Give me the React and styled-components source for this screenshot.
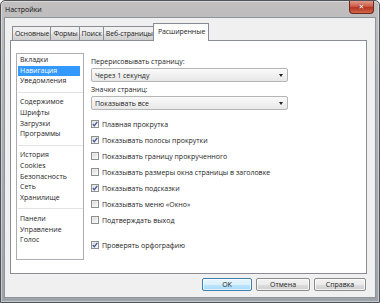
import React from 'react'
import styled, { createGlobalStyle, css } from 'styled-components'

const GlobalStyle = createGlobalStyle`
  html, body {
    margin: 0;
    padding: 0;
    background: #fff;
    overflow: hidden;
  }
  body {
    font-family: "Open Sans", "Noto Sans", Arial, sans-serif;
    font-size: 7px;
    color: #1e1e1e;
  }
`

const sections = [
  ['Вкладки', 'Навигация', 'Уведомления'],
  ['Содержимое', 'Шрифты', 'Загрузки', 'Программы'],
  ['История', 'Cookies', 'Безопасность', 'Сеть', 'Хранилище'],
  ['Панели', 'Управление', 'Голос']
]

const tabs = ['Основные', 'Формы', 'Поиск', 'Веб-страницы', 'Расширенные']

const options = [
  { label: 'Плавная прокрутка', checked: true },
  { label: 'Показывать полосы прокрутки', checked: true },
  { label: 'Показывать границу прокрученного', checked: false },
  { label: 'Показывать размеры окна страницы в заголовке', checked: false },
  { label: 'Показывать подсказки', checked: true },
  { label: 'Показывать меню «Окно»', checked: false },
  { label: 'Подтверждать выход', checked: false },
  { label: 'Проверять орфографию', checked: true, spaced: true }
]

const Window = styled.div`
  width: 380px;
  height: 303px;
  box-sizing: border-box;
  display: flex;
  flex-direction: column;
  border: 1px solid #4f5358;
  border-radius: 5px 5px 0 0;
  background: linear-gradient(180deg, #c2bfbf 0%, #b0b3b8 25%, #9ea3aa 100%);
  box-shadow: inset 0 0 0 1px rgba(255, 255, 255, 0.4);
`

const TitleBar = styled.div`
  height: 16px;
  flex: none;
  display: flex;
  align-items: center;
  justify-content: space-between;
  padding-left: 4px;
`

const Title = styled.span`
  color: #111;
  margin-top: 1px;
`

const CloseButton = styled.div`
  width: 25px;
  height: 13px;
  margin-right: 5px;
  margin-top: -3px;
  box-sizing: border-box;
  border: 1px solid #6b2b22;
  border-top: none;
  border-radius: 0 0 4px 4px;
  background: linear-gradient(180deg, #e39a8c 0%, #cd5a47 45%, #b53520 55%, #d2664a 100%);
  display: flex;
  align-items: center;
  justify-content: center;
  color: #fff;
  font-family: "DejaVu Sans", sans-serif;
  font-weight: bold;
  font-size: 7px;
  line-height: 1;
  text-shadow: 0 0 2px #5a1a10;
`

const Client = styled.div`
  flex: 1;
  margin: 0 3px 4px 3px;
  border: 1px solid #8d949c;
  background: #f0f0f0;
  display: flex;
  flex-direction: column;
  padding: 5px 8px 6px 5px;
`

const TabRow = styled.div`
  display: flex;
  align-items: flex-end;
  padding-left: 2px;
  height: 17px;
  position: relative;
  z-index: 1;
`

const Tab = styled.div`
  box-sizing: border-box;
  height: 14px;
  padding: 0 1px 0 2px;
  border: 1px solid #898c95;
  border-bottom: none;
  margin-right: -1px;
  background: linear-gradient(180deg, #f2f2f2 0%, #ebebeb 50%, #dddddd 51%, #cfcfcf 100%);
  display: flex;
  align-items: center;
  line-height: 1;
  white-space: nowrap;
  letter-spacing: -0.1px;
  ${(p) =>
    p.$active &&
    css`
      height: 18px;
      margin: 0 -2px -1px -1px;
      padding: 0 3px 2px 4px;
      background: #fff;
    `}
`

const Panel = styled.div`
  height: 234px;
  box-sizing: border-box;
  border: 1px solid #898c95;
  background: #fff;
  display: flex;
  gap: 7px;
  padding: 12px 0 0 5px;
`

const ListBox = styled.div`
  width: 68px;
  height: 207px;
  box-sizing: border-box;
  border: 1px solid #abadb3;
  padding: 1px 3px 0 1px;
  flex: none;
`

const ListItem = styled.div`
  height: 10.6px;
  line-height: 10.6px;
  padding-left: 2px;
  white-space: nowrap;
  ${(p) =>
    p.$selected &&
    css`
      background: #3399ff;
      color: #fff;
    `}
`

const ListSeparator = styled.div`
  height: 10.6px;
  display: flex;
  align-items: center;
  margin-right: -3px;

  &::after {
    content: '';
    flex: 1;
    height: 1px;
    background: #e3e3e3;
  }
`

const Settings = styled.div`
  width: 197px;
  display: flex;
  flex-direction: column;
  padding-top: 3px;
`

const Label = styled.div`
  height: 11px;
  line-height: 11px;
  margin-top: ${(p) => p.$top || 0}px;
`

const Select = styled.div`
  height: 14px;
  box-sizing: border-box;
  margin-top: 1px;
  border: 1px solid #b5b5b5;
  border-radius: 2px;
  background: linear-gradient(180deg, #fafafa 0%, #f1f1f1 50%, #e8e8e8 100%);
  display: flex;
  align-items: center;
  justify-content: space-between;
  padding: 0 3px;
  line-height: 1;
`

const Arrow = styled.span`
  width: 0;
  height: 0;
  border-left: 2.5px solid transparent;
  border-right: 2.5px solid transparent;
  border-top: 3px solid #222;
  margin-right: 1px;
`

const Options = styled.div`
  display: flex;
  flex-direction: column;
  margin-top: 6px;
`

const OptionRow = styled.div`
  height: 16px;
  display: flex;
  align-items: center;
  gap: 3px;
  margin-top: ${(p) => (p.$spaced ? 9 : 0)}px;
  white-space: nowrap;

  svg {
    flex: none;
  }
`

const ButtonRow = styled.div`
  display: flex;
  justify-content: flex-end;
  gap: 4px;
  margin-top: 4px;
  padding-right: 1px;
`

const Button = styled.div`
  width: ${(p) => p.$w}px;
  height: 13px;
  box-sizing: border-box;
  border: 1px solid ${(p) => (p.$default ? '#3c7fb1' : '#8b8b8b')};
  border-radius: 2px;
  background: ${(p) =>
    p.$default
      ? 'linear-gradient(180deg, #eaf6fd 0%, #d9f0fc 50%, #bee6fd 51%, #a7d9f5 100%)'
      : 'linear-gradient(180deg, #f2f2f2 0%, #ebebeb 50%, #dddddd 51%, #cfcfcf 100%)'};
  box-shadow: inset 0 0 0 1px rgba(255, 255, 255, 0.7);
  display: flex;
  align-items: center;
  justify-content: center;
  line-height: 1;
`

const Checkbox = ({ checked }) => (
  <svg width="8" height="8" viewBox="0 0 8 8">
    <defs>
      <linearGradient id="cbfill" x1="0" y1="0" x2="1" y2="1">
        <stop offset="0" stopColor="#d8d8d8" />
        <stop offset="1" stopColor="#fafafa" />
      </linearGradient>
    </defs>
    <rect x="0.5" y="0.5" width="7" height="7" fill="#f4f4f4" stroke="#8e8f8f" />
    <rect x="1.5" y="1.5" width="5" height="5" fill="url(#cbfill)" />
    {checked && (
      <path d="M1.8 4.1 L3.3 5.8 L6.3 1.8" fill="none" stroke="#3f5590" strokeWidth="1.3" />
    )}
  </svg>
)

export default function App() {
  return (
    <>
      <GlobalStyle />
      <Window>
        <TitleBar>
          <Title>Настройки</Title>
          <CloseButton>✕</CloseButton>
        </TitleBar>
        <Client>
          <TabRow>
            {tabs.map((t, i) => (
              <Tab key={t} $active={i === tabs.length - 1}>
                {t}
              </Tab>
            ))}
          </TabRow>
          <Panel>
            <ListBox>
              {sections.map((group, gi) => (
                <React.Fragment key={gi}>
                  {gi > 0 && <ListSeparator />}
                  {group.map((item) => (
                    <ListItem key={item} $selected={item === 'Навигация'}>
                      {item}
                    </ListItem>
                  ))}
                </React.Fragment>
              ))}
            </ListBox>
            <Settings>
              <Label>Перерисовывать страницу:</Label>
              <Select>
                <span>Через 1 секунду</span>
                <Arrow />
              </Select>
              <Label $top={2}>Значки страниц:</Label>
              <Select>
                <span>Показывать все</span>
                <Arrow />
              </Select>
              <Options>
                {options.map((o) => (
                  <OptionRow key={o.label} $spaced={o.spaced}>
                    <Checkbox checked={o.checked} />
                    <span>{o.label}</span>
                  </OptionRow>
                ))}
              </Options>
            </Settings>
          </Panel>
          <ButtonRow>
            <Button $w={50} $default>OK</Button>
            <Button $w={54}>Отмена</Button>
            <Button $w={52}>Справка</Button>
          </ButtonRow>
        </Client>
      </Window>
    </>
  )
}
